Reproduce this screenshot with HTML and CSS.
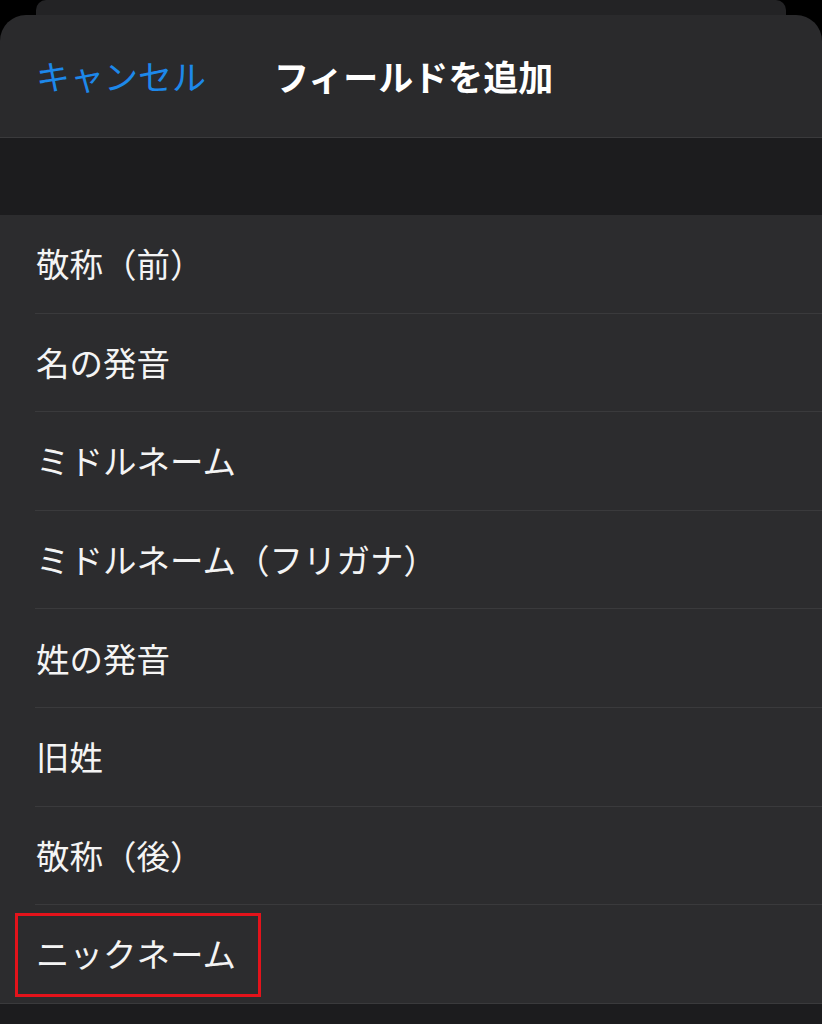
FILE: index.html
```html
<!DOCTYPE html>
<html lang="ja">
<head>
<meta charset="utf-8">
<link rel="stylesheet" href="styles.css">
</head>
<body>
<div class="back-sheet"></div>
<div class="sheet">
  <header class="header">
    <span class="cancel">キャンセル</span>
    <span class="title">フィールドを追加</span>
  </header>
  <div class="section-gap"></div>
  <ul class="list">
    <li class="row"><span class="label">敬称（前）</span></li>
    <li class="row"><span class="label">名の発音</span></li>
    <li class="row"><span class="label">ミドルネーム</span></li>
    <li class="row"><span class="label">ミドルネーム（フリガナ）</span></li>
    <li class="row"><span class="label">姓の発音</span></li>
    <li class="row"><span class="label">旧姓</span></li>
    <li class="row"><span class="label">敬称（後）</span></li>
    <li class="row last"><span class="label">ニックネーム</span><span class="highlight"></span></li>
  </ul>
  <div class="footer-gap"></div>
</div>
</body>
</html>
```
FILE: styles.css
```css
html, body {
  margin: 0;
  padding: 0;
  background: #000;
  height: 1024px;
  overflow: hidden;
  font-family: "Noto Sans CJK JP", "Noto Sans", sans-serif;
}
.back-sheet {
  height: 15px;
  margin: 0 36px;
  background: #232325;
  border-radius: 10px 10px 0 0;
}
.sheet {
  background: #2a2a2c;
  border-radius: 26px 26px 0 0;
}
.header {
  display: flex;
  align-items: center;
  padding-left: 36px;
  border-bottom: 1px solid #3a3a3c;
  box-sizing: border-box;
  height: 123px;
  padding-bottom: 1px;
}
.cancel {
  color: #1d88ea;
  font-size: 34px;
  width: 238px;
}
.title {
  color: #fff;
  font-size: 35px;
  font-weight: 700;
}
.section-gap {
  height: 77px;
  background: #1c1c1e;
}
.list {
  list-style: none;
  margin: 0;
  padding: 0;
  background: #2c2c2e;
}
.row {
  position: relative;
  height: 98.6px;
  padding-left: 35px;
  box-sizing: border-box;
}
.label {
  display: flex;
  align-items: center;
  height: 100%;
  box-sizing: border-box;
  border-bottom: 1px solid #3a3a3c;
  color: #f4f4f4;
  font-size: 33.5px;
  padding-left: 1px;
  padding-bottom: 2px;
}
.row.last {
  border-bottom: 1px solid #3a3a3c;
}
.row.last .label {
  border-bottom: none;
}
.highlight {
  position: absolute;
  left: 15px;
  top: 8px;
  width: 246px;
  height: 84px;
  box-sizing: border-box;
  border: 3px solid #e3131b;
}
.footer-gap {
  height: 40px;
  background: #1c1c1e;
}
```
